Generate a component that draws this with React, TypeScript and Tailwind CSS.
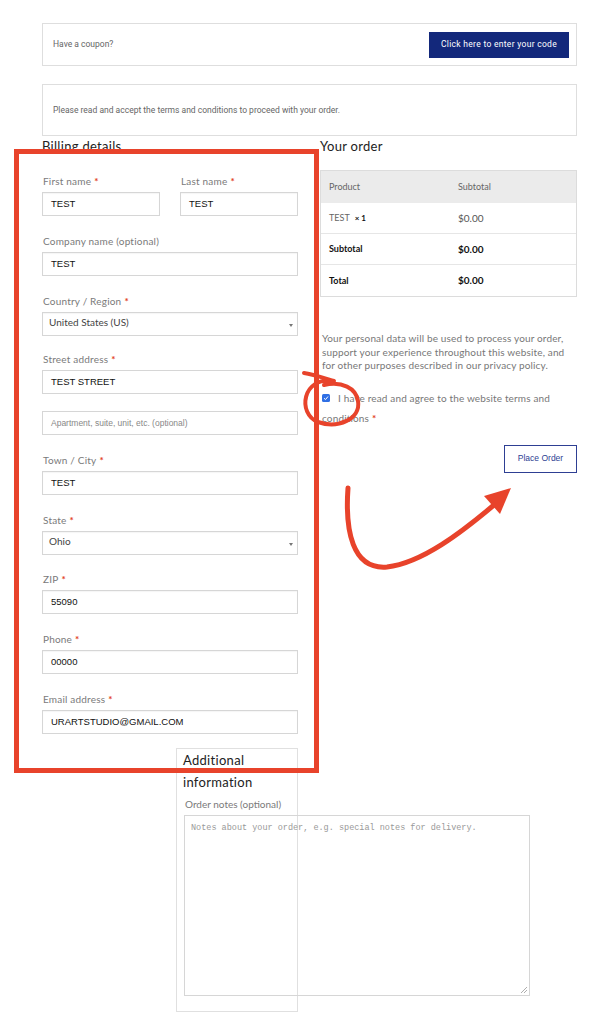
import React from "react";

const Req = () => <span className="text-[#e2401c] font-bold ml-[3px]">*</span>;

function Field({
  label,
  value,
  required = true,
  select = false,
  gap = "mb-[18px]",
}: {
  label: string;
  value: string;
  required?: boolean;
  select?: boolean;
  gap?: string;
}) {
  return (
    <div className={gap}>
      <div className="h-[14px] leading-[14px] text-[10px] text-[#7a7a7a] tracking-[0.2px] pl-[1px]">
        {label}
        {required ? <Req /> : null}
      </div>
      <div
        className={
          "mt-[4px] h-[24px] border border-[#d6d6d6] shadow-[inset_0_1px_1px_rgba(0,0,0,0.04)] bg-white relative " +
          (select
            ? "pl-[6px] pt-[2px] text-[10px] text-[#444] font-['Lato',sans-serif]"
            : "pl-[8px] flex items-center text-[9.5px] text-[#111] font-['Liberation_Sans',Arial,sans-serif]")
        }
      >
        {value}
        {select ? (
          <span className="absolute right-[4px] top-[11px] w-0 h-0 border-l-[2.5px] border-r-[2.5px] border-t-[3px] border-l-transparent border-r-transparent border-t-[#777]" />
        ) : null}
      </div>
    </div>
  );
}

export default function App() {
  return (
    <div className="relative w-[613px] min-h-[1024px] bg-white overflow-hidden font-['Lato',sans-serif]">
      <div className="pt-[23px] pl-[42px]">
        {/* coupon */}
        <div className="w-[535px] h-[43px] border border-[#dedede] flex items-center justify-between pl-[10px] pr-[7px]">
          <span className="text-[8.5px] text-[#666] font-['Roboto',sans-serif]">Have a coupon?</span>
          <button className="w-[140px] h-[26px] bg-[#13287b] text-white text-[8.5px] tracking-[0.3px] font-['Roboto',sans-serif]">
            Click here to enter your code
          </button>
        </div>
        {/* notice */}
        <div className="mt-[18px] w-[535px] h-[52px] border border-[#dedede] flex items-center pl-[10px]">
          <span className="text-[8.5px] text-[#666] font-['Roboto',sans-serif]">
            Please read and accept the terms and conditions to proceed with your order.
          </span>
        </div>

        <div className="flex gap-[22px]">
          {/* billing */}
          <div className="w-[256px]">
            <h3 className="h-[20px] leading-[20px] text-[13px] text-[#222] tracking-[0.3px]">Billing details</h3>
            <div className="mt-[18px] flex justify-between">
              <div className="w-[118px]">
                <Field label="First name" value="TEST" />
              </div>
              <div className="w-[118px]">
                <Field label="Last name" value="TEST" />
              </div>
            </div>
            <Field label="Company name (optional)" value="TEST" required={false} />
            <Field label="Country / Region" value="United States (US)" select gap="mb-[16px]" />
            <div className="mb-[18px]">
              <div className="h-[14px] leading-[14px] text-[10px] text-[#7a7a7a] tracking-[0.2px] pl-[1px]">
                Street address
                <Req />
              </div>
              <div className="mt-[4px] h-[24px] border border-[#d6d6d6] pl-[8px] flex items-center text-[9.5px] text-[#111] font-['Liberation_Sans',Arial,sans-serif]">
                TEST STREET
              </div>
              <div className="mt-[17px] h-[24px] border border-[#d6d6d6] pl-[8px] flex items-center text-[8.5px] text-[#888] font-['Liberation_Sans',Arial,sans-serif]">
                Apartment, suite, unit, etc. (optional)
              </div>
            </div>
            <Field label="Town / City" value="TEST" />
            <Field label="State" value="Ohio" select gap="mb-[17px]" />
            <Field label="ZIP" value="55090" />
            <Field label="Phone" value="00000" />
            <Field label="Email address" value="URARTSTUDIO@GMAIL.COM" gap="mb-[14px]" />

            {/* additional information */}
            <div className="ml-[134px] w-[122px] border border-[#e0e0e0] pl-[6px] pb-[15px]">
              <h3 className="text-[13px] leading-[22px] text-[#222] tracking-[0.3px]">
                Additional
                <br />
                information
              </h3>
              <div className="mt-[4px] pl-[2px] h-[14px] leading-[14px] text-[10px] text-[#7a7a7a]">
                Order notes (optional)
              </div>
              <div className="relative mt-[4px] ml-[1px] w-[346px] h-[181px] border border-[#d6d6d6] pl-[6px] pt-[6px] text-[8.5px] text-[#999] font-['Liberation_Mono',monospace]">
                Notes about your order, e.g. special notes for delivery.
                <svg className="absolute right-[1px] bottom-[1px]" width="8" height="8" viewBox="0 0 8 8">
                  <path d="M7 1 L1 7 M7 4 L4 7" stroke="#999" strokeWidth="0.8" />
                </svg>
              </div>
            </div>
          </div>

          {/* order */}
          <div className="w-[257px]">
            <h3 className="h-[20px] leading-[20px] text-[13px] text-[#222] tracking-[0.3px]">Your order</h3>
            <div className="mt-[14px] border border-[#dcdcdc] text-[9px]">
              <div className="grid grid-cols-[137px_1fr] h-[32px] items-center bg-[#ebebeb] text-[#666]">
                <span className="pl-[8px]">Product</span>
                <span>Subtotal</span>
              </div>
              <div className="grid grid-cols-[137px_1fr] h-[31px] items-center border-b border-[#e6e6e6]">
                <span className="pl-[8px] text-[#666]">
                  TEST <b className="text-[#111] text-[8px] ml-[3px]">× 1</b>
                </span>
                <span className="text-[#555] text-[10px]">$0.00</span>
              </div>
              <div className="grid grid-cols-[137px_1fr] h-[31px] items-center border-b border-[#e6e6e6] font-bold text-[#111]">
                <span className="pl-[8px]">Subtotal</span>
                <span className="text-[10px]">$0.00</span>
              </div>
              <div className="grid grid-cols-[137px_1fr] h-[31px] items-center font-bold text-[#111]">
                <span className="pl-[8px]">Total</span>
                <span className="text-[10px]">$0.00</span>
              </div>
            </div>

            <p className="mt-[35px] pl-[2px] text-[10px] leading-[13.5px] text-[#777] tracking-[0.15px]">
              Your personal data will be used to process your order,
              <br />
              support your experience throughout this website, and
              <br />
              for other purposes described in our privacy policy.
            </p>
            <div className="mt-[15px] pl-[2px] text-[10px] leading-[20px] text-[#777] tracking-[0.15px]">
              <div className="flex items-center">
                <span className="w-[8px] h-[8px] rounded-[1.5px] bg-[#2f6fe4] flex items-center justify-center mr-[8px]">
                  <svg width="6" height="6" viewBox="0 0 6 6">
                    <path d="M1 3.2 L2.5 4.6 L5 1.5" stroke="white" strokeWidth="1" fill="none" />
                  </svg>
                </span>
                I have read and agree to the website terms and
              </div>
              <div>
                conditions
                <Req />
              </div>
            </div>
            <div className="mt-[17px] flex justify-end">
              <button className="w-[73px] h-[28px] border border-[#2e3f93] text-[#2e3f93] text-[8.5px] font-['Liberation_Sans',Arial,sans-serif]">
                Place Order
              </button>
            </div>
          </div>
        </div>
      </div>

      {/* red markup on top of the screenshot */}
      <svg className="absolute left-0 top-0 pointer-events-none" width="613" height="1024" viewBox="0 0 613 1024">
        <rect x="16.5" y="151.5" width="300" height="619" fill="none" stroke="#e8432b" strokeWidth="5" />
        <path
          d="M304 373 C 312 374, 324 378, 334 381 M334 381 C 302 376, 297 414, 318 422 C 338 429, 361 419, 358 401 C 356 388, 342 381, 324 385"
          fill="none"
          stroke="#e8432b"
          strokeWidth="4"
          strokeLinecap="round"
        />
        <path
          d="M348 488 C 345 530, 352 570, 387 567 C 422 563, 462 532, 494 505"
          fill="none"
          stroke="#e8432b"
          strokeWidth="5"
          strokeLinecap="round"
        />
        <polygon points="484,496 511,488 500,514" fill="#e8432b" />
      </svg>
    </div>
  );
}
